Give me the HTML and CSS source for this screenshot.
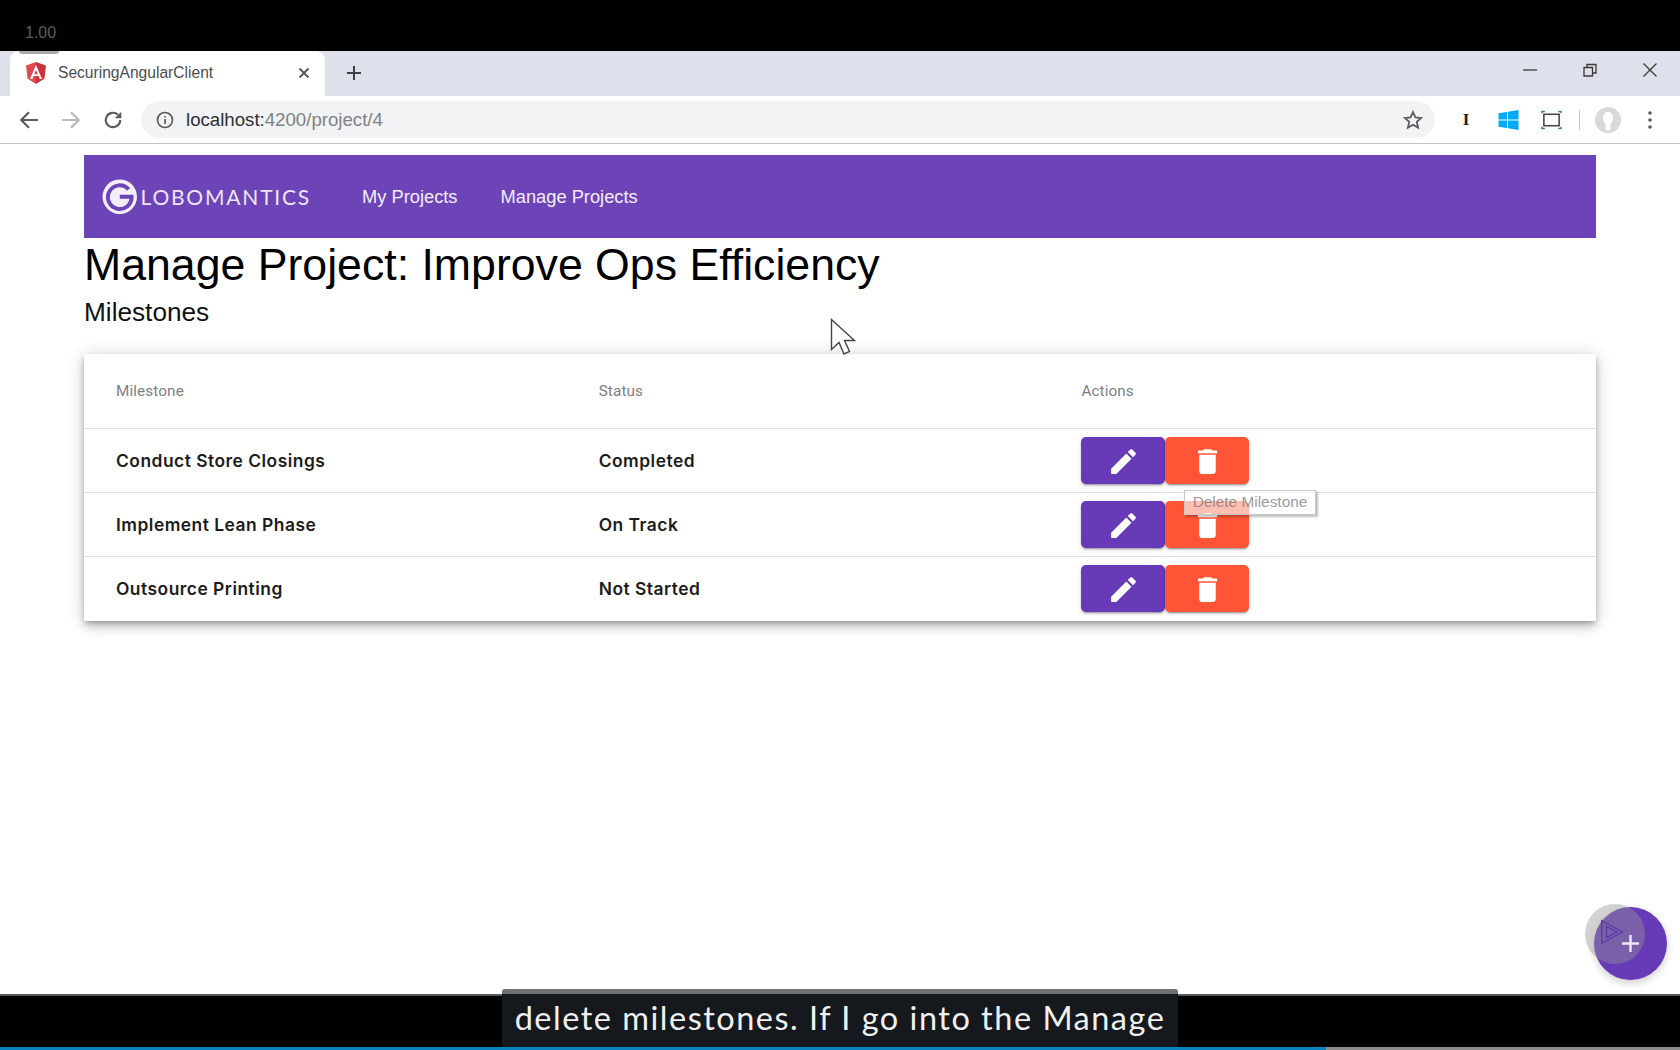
FILE: index.html
```html
<!DOCTYPE html>
<html lang="en">
<head>
<meta charset="utf-8">
<title>SecuringAngularClient</title>
<link rel="stylesheet" href="styles.css">
</head>
<body>
<div class="frame">
  <div class="topbar"></div>
  <div class="tabstrip">
    <div class="tab">
      <svg class="favicon" viewBox="0 0 20 22"><path fill="#e04a4e" d="M10 0 0 3.600l1.600 13.200L10 22z"/><path fill="#c8323a" d="M10 0l10 3.600-1.600 13.200L10 22z"/><path fill="#fff" d="M10 3 4 17h2.300l1.200-3h5l1.200 3H16L10 3zm1.700 9.200H8.300L10 8z"/></svg>
      <span class="tab-title">SecuringAngularClient</span>
      <svg class="tab-close" viewBox="0 0 12 12"><path d="M1.500 1.500l9 9M10.500 1.500l-9 9"/></svg>
    </div>
    <svg class="new-tab" viewBox="0 0 16 16"><path d="M8 1v14M1 8h14"/></svg>
    <div class="win-controls">
      <svg class="win" viewBox="0 0 14 14"><path d="M0 7h14"/></svg>
      <svg class="win" viewBox="0 0 14 14"><path d="M1 4.500h8.500V13H1zM4 4.500V1.500h9v8.500h-3.500"/></svg>
      <svg class="win" viewBox="0 0 14 14"><path d="M.5.5l13 13M13.500.5l-13 13"/></svg>
    </div>
  </div>
  <div class="toolbar">
    <svg class="nav" viewBox="0 0 18 18"><path d="M17 9H2M9 2 2 9l7 7"/></svg>
    <svg class="nav nav-off" viewBox="0 0 18 18"><path d="M1 9h15M9 2l7 7-7 7"/></svg>
    <svg class="nav" viewBox="0 0 18 18"><path d="M15.500 9a6.500 6.500 0 1 1-2-4.700"/><path class="solid" d="M16.500 1.500v6h-6z"/></svg>
    <div class="omnibox">
      <svg class="info" viewBox="0 0 18 18"><circle cx="9" cy="9" r="7.500"/><path d="M9 8v5M9 5v1.600"/></svg>
      <span class="url"><span class="url-host">localhost:</span>4200/project/4</span>
      <svg class="star" viewBox="0 0 20 20"><path d="M10 2l2.400 5.400 5.800.6-4.400 3.900 1.300 5.700L10 14.700l-5.100 2.900 1.300-5.700L1.800 8l5.800-.6z"/></svg>
    </div>
    <div class="ext-icons">
      <span class="ext-i">I</span>
      <svg class="ext" viewBox="0 0 20 20"><path fill="#03a9f4" d="M0 3.200 8.500 2v7.500H0zM9.500 1.800 20 0v9.500H9.500zM0 10.500h8.500V18L0 16.800zM9.500 10.500H20V20L9.500 18.200z"/></svg>
      <svg class="ext" viewBox="0 0 22 20"><rect x="3" y="4" width="16" height="12" fill="none" stroke="#444" stroke-width="1.600"/><path d="M1 3V1h3M18 1h3v2M1 17v2h3M18 19h3v-2" fill="none" stroke="#3d8b4f" stroke-width="1.600"/></svg>
      <span class="ext-sep"></span>
      <svg class="avatar" viewBox="0 0 26 26"><circle cx="13" cy="13" r="13" fill="#d9d9d9"/><path d="M13 5c3 0 5 2.500 5 6 0 3-1.500 5.500-2.500 6.500V23a12 12 0 0 1-5 0v-5.500C9.500 16.500 8 14 8 11c0-3.500 2-6 5-6z" fill="#fff"/></svg>
      <svg class="kebab" viewBox="0 0 4 18"><circle cx="2" cy="2" r="1.800"/><circle cx="2" cy="9" r="1.800"/><circle cx="2" cy="16" r="1.800"/></svg>
    </div>
  </div>
  <main class="page">
    <header class="app-header">
      <div class="logo">
        <svg class="logo-mark" viewBox="0 0 36 36"><circle cx="18" cy="18" r="17.500" fill="#f3eefa"/><path d="M27 10.500A12 12 0 1 0 30 18H18" fill="none" stroke="#6c44b8" stroke-width="4"/></svg>
        <span class="logo-text">LOBOMANTICS</span>
      </div>
      <nav class="app-nav"><a>My Projects</a><a>Manage Projects</a></nav>
    </header>
    <h1 class="title">Manage Project: Improve Ops Efficiency</h1>
    <h2 class="subtitle">Milestones</h2>
    <section class="card">
      <div class="row row-head"><div>Milestone</div><div>Status</div><div>Actions</div></div>
      <div class="row"><div>Conduct Store Closings</div><div>Completed</div>
        <div class="actions"><button class="btn btn-edit"><svg viewBox="0 0 24 24"><path d="M3 17.250V21h3.750L17.810 9.940l-3.750-3.750L3 17.250zM20.710 7.040a1 1 0 0 0 0-1.410l-2.340-2.340a1 1 0 0 0-1.410 0l-1.830 1.830 3.750 3.750 1.830-1.830z"/></svg></button><button class="btn btn-del"><svg viewBox="0 0 24 24"><path d="M6 19c0 1.100.9 2 2 2h8c1.100 0 2-.9 2-2V7H6v12zM19 4h-3.500l-1-1h-5l-1 1H5v2h14V4z"/></svg></button></div></div>
      <div class="row"><div>Implement Lean Phase</div><div>On Track</div>
        <div class="actions"><button class="btn btn-edit"><svg viewBox="0 0 24 24"><path d="M3 17.250V21h3.750L17.810 9.940l-3.750-3.750L3 17.250zM20.710 7.040a1 1 0 0 0 0-1.410l-2.340-2.340a1 1 0 0 0-1.410 0l-1.830 1.830 3.750 3.750 1.830-1.830z"/></svg></button><button class="btn btn-del"><svg viewBox="0 0 24 24"><path d="M6 19c0 1.100.9 2 2 2h8c1.100 0 2-.9 2-2V7H6v12zM19 4h-3.500l-1-1h-5l-1 1H5v2h14V4z"/></svg></button></div></div>
      <div class="row"><div>Outsource Printing</div><div>Not Started</div>
        <div class="actions"><button class="btn btn-edit"><svg viewBox="0 0 24 24"><path d="M3 17.250V21h3.750L17.810 9.940l-3.750-3.750L3 17.250zM20.710 7.040a1 1 0 0 0 0-1.410l-2.340-2.340a1 1 0 0 0-1.410 0l-1.830 1.830 3.750 3.750 1.830-1.830z"/></svg></button><button class="btn btn-del"><svg viewBox="0 0 24 24"><path d="M6 19c0 1.100.9 2 2 2h8c1.100 0 2-.9 2-2V7H6v12zM19 4h-3.500l-1-1h-5l-1 1H5v2h14V4z"/></svg></button></div></div>
    </section>
  </main>
  <div class="bottombar"><div class="progress"></div></div>

  <span class="speed">1.00</span>
  <span class="speed-tab"></span>
  <div class="tooltip">Delete Milestone</div>
  <svg class="cursor" viewBox="0 0 26 40"><path d="M1.500 1.500v30l7.500-7 5 11.500 5.500-2.500-5-11h10z" fill="#fff" stroke="#444" stroke-width="1.400" stroke-linejoin="miter"/></svg>
  <div class="fab"><svg class="fab-plus" viewBox="0 0 20 20"><path d="M10 1v18M1 10h18"/></svg></div>
  <div class="ps-badge"><svg viewBox="0 0 34 34"><path d="M5 5v24l22-12zM10 11v12l11-6z" fill="none" stroke="#5d3ca8" stroke-width="1.500"/></svg></div>
  <div class="caption">delete milestones. If I go into the Manage</div>
</div>
</body>
</html>
```
FILE: styles.css
```css
* { box-sizing: border-box; }
html, body { margin: 0; height: 100%; background: #000; }
body { font-family: "Liberation Sans", Arial, sans-serif; overflow: hidden; }
.frame { position: relative; width: 1680px; height: 1050px; display: flex; flex-direction: column; overflow: hidden; }
.topbar { height: 51px; background: #000; flex: none; }

.tabstrip { height: 45px; flex: none; background: #dee1ec; display: flex; align-items: center; padding-left: 10px; }
.tab { width: 315px; height: 45px; background: #fff; border-radius: 9px 9px 0 0; display: flex; align-items: center; padding: 0 15px 1px 16px; }
.favicon { width: 20px; height: 22px; flex: none; }
.tab-title { margin-left: 12px; font-size: 15.600px; color: #4a4d52; flex: 1; }
.tab-close { width: 12px; height: 12px; fill: none; stroke: #5a5a5a; stroke-width: 2; }
.new-tab { width: 16px; height: 16px; margin: 0 0 2px 21px; fill: none; stroke: #3c4043; stroke-width: 2; }
.win-controls { margin-left: auto; display: flex; gap: 46px; padding: 0 23px 8px 0; }
.win { width: 14px; height: 14px; fill: none; stroke: #3a3a3a; stroke-width: 1.300; }

.toolbar { height: 48px; flex: none; background: #fff; border-bottom: 1px solid #c4c4c6; display: flex; align-items: center; padding: 0 0 0 19px; }
.nav { width: 20px; height: 20px; flex: none; margin-right: 22px; fill: none; stroke: #5b5c5f; stroke-width: 2; }
.nav .solid { fill: #5b5c5f; stroke: none; }
.nav-off { stroke: #b9babc; }
.omnibox { width: 1294px; height: 37px; margin-left: -4px; background: #f1f3f4; border-radius: 19px; display: flex; align-items: center; padding: 0 12px 0 15px; }
.info { width: 18px; height: 18px; fill: none; stroke: #5b5c5f; stroke-width: 1.700; flex: none; }
.url { margin-left: 12px; font-size: 18.650px; color: #7f8184; flex: 1; }
.url-host { color: #2e3033; }
.star { width: 20px; height: 20px; fill: none; stroke: #5b5c5f; stroke-width: 1.800; flex: none; }
.ext-icons { display: flex; align-items: center; margin-left: 21px; }
.ext-i { width: 20px; text-align: center; font: 700 17px "Liberation Serif", serif; color: #222; }
.ext { width: 21px; height: 20px; flex: none; margin-left: 22px; }
.ext-sep { width: 1px; height: 20px; background: #c9c9c9; margin-left: 17px; }
.avatar { width: 26px; height: 26px; flex: none; margin-left: 15px; }
.kebab { width: 4px; height: 18px; margin-left: 27px; fill: #5b5c5f; flex: none; }

.page { flex: 1; background: #fff; padding: 10.500px 84px 0; min-height: 0; }
.app-header { height: 83.500px; background: #6c44b8; display: flex; align-items: center; padding-left: 18px; }
.logo { display: flex; align-items: center; width: 264px; }
.logo-mark { width: 35.500px; height: 35.500px; flex: none; }
.logo-text { font-size: 21px; letter-spacing: 1.800px; color: #ece6f6; font-family: "Lato", sans-serif; font-weight: 400; margin-left: 3px; }
.app-nav { display: flex; gap: 43px; margin: 2px 0 0 -4px; }
.app-nav a { color: #f3eefa; font-size: 18.300px; }
.title { margin: 0; font-weight: 400; font-size: 44.650px; line-height: 46px; color: #000; padding-top: 4px; height: 50px; }
.subtitle { margin: 0; font-weight: 400; font-size: 26.200px; line-height: 28px; color: #111; padding-top: 10px; height: 66px; }
.card { background: #fff; padding-bottom: 1px; box-shadow: 0 3px 5px -1px rgba(0,0,0,.24), 0 6px 10px 0 rgba(0,0,0,.16), 0 1px 18px 0 rgba(0,0,0,.15); }
.row { display: grid; grid-template-columns: 482.700px 482.700px 1fr; padding-left: 32px; height: 64px; align-items: center; font-family: Inter, sans-serif; font-size: 17.400px; font-weight: 600; color: #1c1c1c; border-top: 1px solid #e0e0e0; letter-spacing: .5px; }
.row-head { height: 74px; border-top: 0; font-family: Roboto, sans-serif; font-size: 15.300px; font-weight: 400; color: #808080; letter-spacing: .1px; }
.row-head > div { padding-bottom: 1px; }
.actions { display: flex; }
.btn { width: 84px; height: 47px; border: 0; padding: 0; border-radius: 5px; display: flex; align-items: center; justify-content: center; box-shadow: 0 3px 1px -2px rgba(0,0,0,.2), 0 2px 2px 0 rgba(0,0,0,.14), 0 1px 5px 0 rgba(0,0,0,.12); }
.btn svg { width: 33px; height: 33px; margin-top: 2px; fill: #fff; }
.btn-edit { background: #673ab7; }
.btn-del { background: #ff5436; }

.bottombar { height: 56px; flex: none; background: #000; border-top: 2px solid #55575a; position: relative; }
.progress { position: absolute; left: 0; right: 0; bottom: 0; height: 3px; background: linear-gradient(to right, #0a84c1 0 1326px, #8c8c8c 1326px); }

.speed { position: absolute; left: 25px; top: 24px; font-size: 16px; color: #5c5c5c; }
.speed-tab { position: absolute; left: 19px; top: 51px; width: 40px; height: 3px; background: #aaa; border-radius: 0 0 4px 4px; }
.tooltip { position: absolute; left: 1184px; top: 490px; width: 132px; height: 25px; border: 1px solid #c7c7c7; background: rgba(255,255,255,.62); box-shadow: 2px 2px 2px rgba(0,0,0,.25); font-size: 15.400px; line-height: 22px; text-align: center; color: rgba(110,110,110,.7); white-space: nowrap; }
.cursor { position: absolute; left: 830px; top: 318px; width: 26px; height: 40px; }
.fab { position: absolute; left: 1594px; top: 907px; width: 73px; height: 73px; border-radius: 50%; background: #673ab7; box-shadow: 0 3px 8px rgba(0,0,0,.2); display: flex; align-items: center; justify-content: center; }
.fab-plus { position: relative; z-index: 1; width: 19px; height: 19px; fill: none; stroke: #ece8f4; stroke-width: 2.500; }
.ps-badge { position: absolute; left: 1585px; top: 904px; width: 60px; height: 60px; border-radius: 50%; background: rgba(150,150,150,.42); padding: 12px 0 0 12px; }
.ps-badge svg { width: 32px; height: 32px; display: block; }
.caption { position: absolute; left: 502px; top: 989px; width: 676px; height: 58px; background: #15181c; border-top: 5px solid #6f7275; border-radius: 3px 3px 0 0; color: #f0f0f0; font: 400 32.500px/48px "Lato", sans-serif; letter-spacing: 1.500px; text-align: center; white-space: nowrap; }
```
